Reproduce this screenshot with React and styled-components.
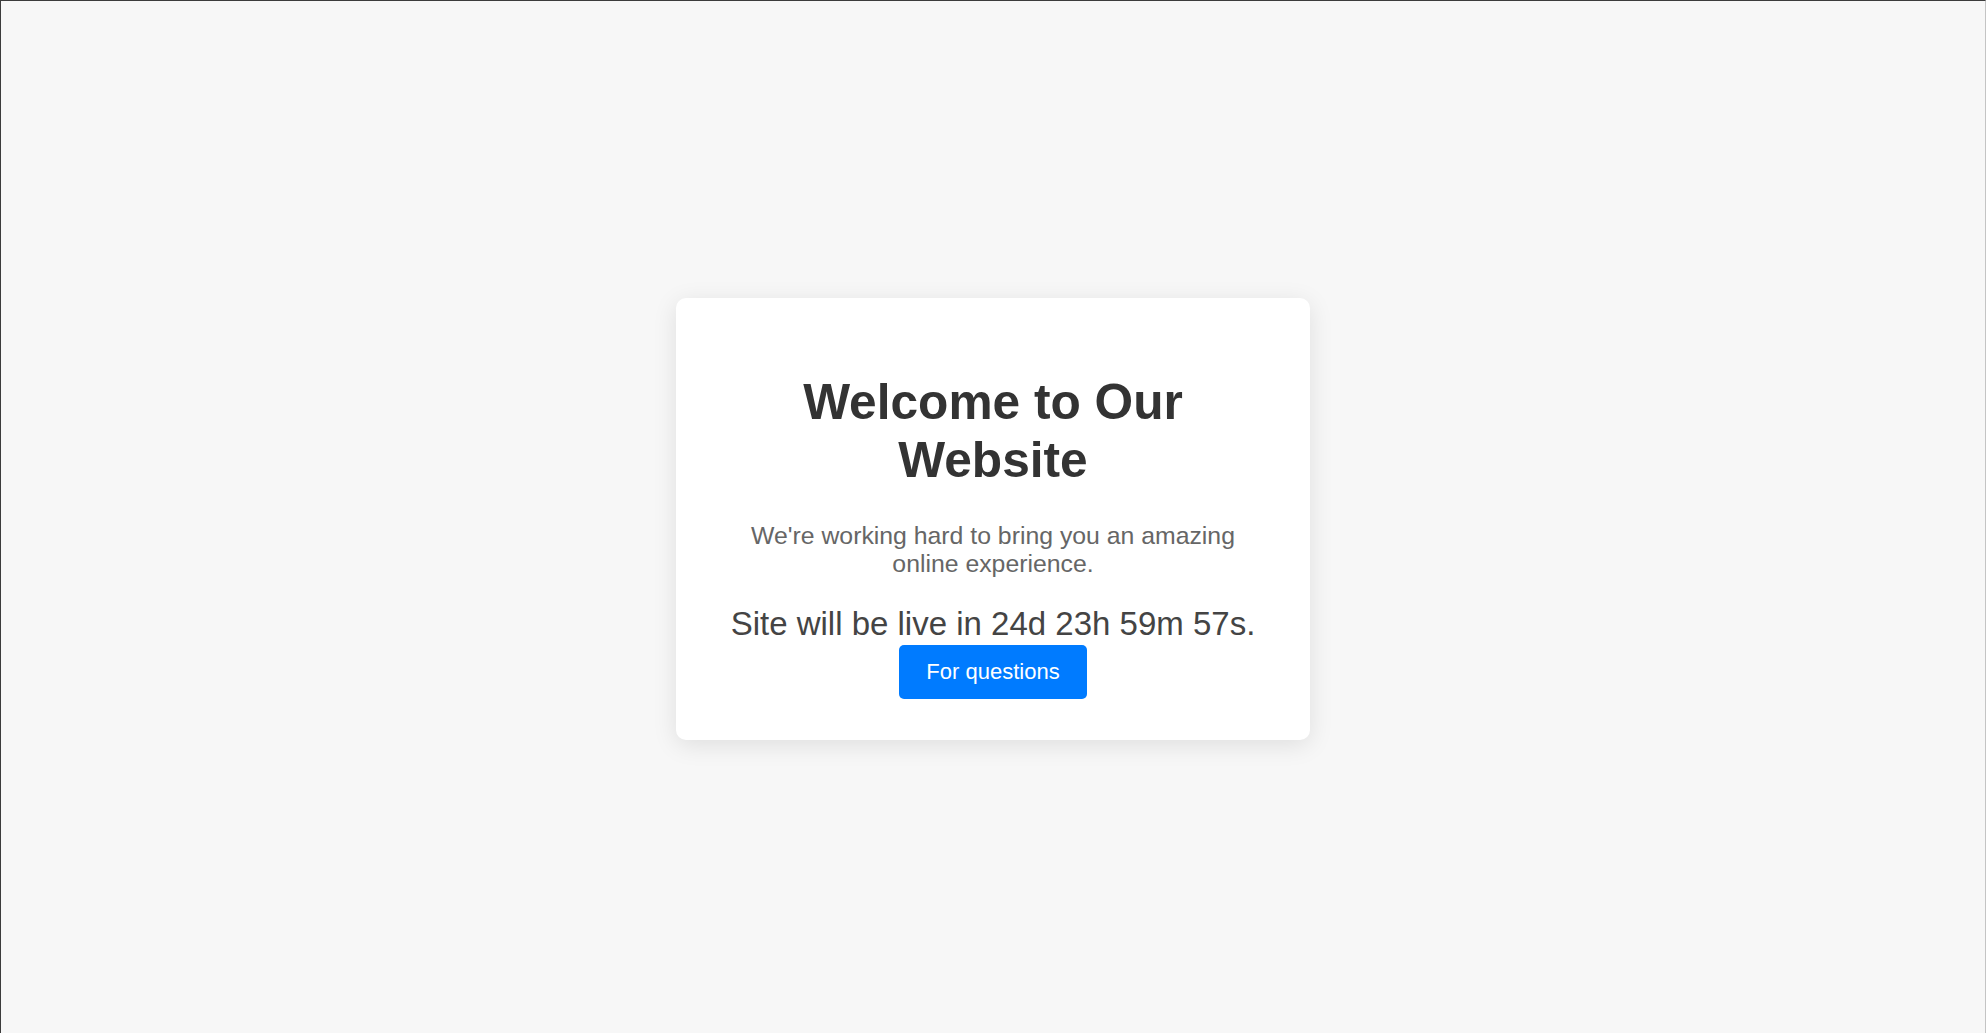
import React, { useEffect, useState } from "react";
import styled, { createGlobalStyle } from "styled-components";

const GlobalStyle = createGlobalStyle`
  * {
    box-sizing: border-box;
  }
  html {
    border-top: 1px solid #3c3c3c;
    border-left: 1px solid #3c3c3c;
    border-right: 1px solid #c4c4c4;
    background-color: #f7f7f7;
  }
  body {
    margin: 0;
    font-family: "Liberation Sans", Arial, sans-serif;
    background-color: #f7f7f7;
  }
`;

const Page = styled.div`
  min-height: calc(100vh - 1px);
  padding-top: 3px;
  display: flex;
  align-items: center;
  justify-content: center;
`;

const Card = styled.div`
  width: 634px;
  padding: 42px 40px 41px;
  background-color: #fff;
  border-radius: 10px;
  box-shadow: 0 5px 25px rgba(0, 0, 0, 0.1);
  text-align: center;
`;

const Title = styled.h1`
  font-size: 49.65px;
  font-weight: 700;
  color: #333;
  margin: 0.67em 0;
`;

const Lead = styled.p`
  font-size: 24.8px;
  color: #666;
  margin: 24.8px 0 27px;
`;

const Countdown = styled.div`
  font-size: 33px;
  color: #444;
  margin-bottom: 1.5px;
`;

const QuestionButton = styled.button`
  font-family: inherit;
  font-size: 22px;
  color: #fff;
  background-color: #007bff;
  border: none;
  border-radius: 5px;
  padding: 14px 27px;
  cursor: pointer;
  &:hover {
    background-color: #0069d9;
  }
`;

const TARGET = { d: 24, h: 23, m: 59, s: 57 };

const App = () => {
  const [left] = useState(TARGET);

  useEffect(() => {
    // countdown frozen for the screenshot
  }, []);

  return (
    <>
      <GlobalStyle />
      <Page>
        <Card>
          <Title>Welcome to Our Website</Title>
          <Lead>
            We're working hard to bring you an amazing online experience.
          </Lead>
          <Countdown>
            Site will be live in {left.d}d {left.h}h {left.m}m {left.s}s.
          </Countdown>
          <QuestionButton type="button">For questions</QuestionButton>
        </Card>
      </Page>
    </>
  );
};

export default App;
